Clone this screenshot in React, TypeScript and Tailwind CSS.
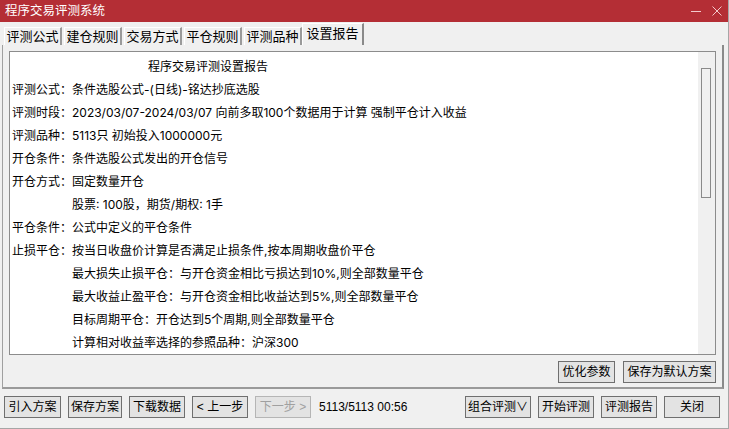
import React, { useState } from 'react';

const FONT = "font-['Liberation_Sans','Noto_Sans_CJK_SC',sans-serif]";

const tabs = ['评测公式', '建仓规则', '交易方式', '平仓规则', '评测品种', '设置报告'];

// report lines: [label, text, indented]
const lines: { label?: string; text: string; indent?: boolean }[] = [
  { label: '评测公式：', text: '条件选股公式-(日线)-铭达抄底选股' },
  { label: '评测时段：', text: '2023/03/07-2024/03/07 向前多取100个数据用于计算 强制平仓计入收益' },
  { label: '评测品种：', text: '5113只 初始投入1000000元' },
  { label: '开仓条件：', text: '条件选股公式发出的开仓信号' },
  { label: '开仓方式：', text: '固定数量开仓' },
  { text: '股票: 100股，期货/期权: 1手', indent: true },
  { label: '平仓条件：', text: '公式中定义的平仓条件' },
  { label: '止损平仓：', text: '按当日收盘价计算是否满足止损条件,按本周期收盘价平仓' },
  { text: '最大损失止损平仓：与开仓资金相比亏损达到10%,则全部数量平仓', indent: true },
  { text: '最大收益止盈平仓：与开仓资金相比收益达到5%,则全部数量平仓', indent: true },
  { text: '目标周期平仓：开仓达到5个周期,则全部数量平仓', indent: true },
  { text: '计算相对收益率选择的参照品种：沪深300', indent: true },
];

const Btn: React.FC<{ w: string; disabled?: boolean; children: React.ReactNode }> = ({ w, disabled, children }) => (
  <button
    className={`${w} h-[22px] flex items-center justify-center border border-[#6f6f6f] bg-[#e3e3e3] text-[12px] leading-none ${disabled ? 'text-[#a0a0a0] border-[#b5b5b5]' : 'text-black'}`}
  >
    {children}
  </button>
);

const App: React.FC = () => {
  const [active, setActive] = useState(5);

  return (
    <div className={`w-[729px] h-[429px] bg-[#f0f0f0] flex flex-col border-r border-b border-[#a6a6a6] ${FONT} text-[12px] text-black overflow-hidden`}>
      {/* title bar */}
      <div className="h-[22px] shrink-0 bg-[#b42e35] flex items-center pl-[5px] text-white text-[12.5px]">
        <span>程序交易评测系统</span>
        <div className="ml-auto flex items-center gap-[11px] pr-[6px]">
          <svg width="10" height="10" viewBox="0 0 10 10"><path d="M0 5.5h10" stroke="#f3c9cb" strokeWidth="1" /></svg>
          <svg width="10" height="10" viewBox="0 0 10 10"><path d="M0.5 0.5l9 9M9.5 0.5l-9 9" stroke="#f3c9cb" strokeWidth="1" /></svg>
        </div>
      </div>

      {/* tabs */}
      <div className="h-[23px] shrink-0 flex items-end pl-[4px] gap-[2px]">
        {tabs.map((t, i) => (
          <div
            key={t}
            onClick={() => setActive(i)}
            className={
              i === active
                ? 'h-[22px] w-[62px] -ml-[2px] flex items-center justify-center border-t border-l border-white border-r-2 border-r-[#8a8a8a] bg-[#f0f0f0] text-[13px] pb-[1px]'
                : 'h-[18px] w-[58px] flex items-center justify-center border-t border-l border-white border-r-2 border-r-[#9a9a9a] bg-[#f0f0f0] text-[13px]'
            }
          >
            {t}
          </div>
        ))}
      </div>

      {/* tab page */}
      <div className="mx-[2px] w-[722px] h-[344px] shrink-0 border-l border-[#a0a0a0] border-r-2 border-r-[#8a8a8a] border-b-2 border-b-[#9a9a9a] flex flex-col pt-[6px] px-[6px]">
        <div className="h-[304px] shrink-0 border border-[#8c8c8c] bg-white flex overflow-hidden">
          <div className="flex-1 pt-[3px] pl-[2px] text-[12px] leading-[23px] overflow-hidden whitespace-nowrap font-['Inter','Noto_Sans_CJK_SC',sans-serif]">
            <div className="pl-[136px]">程序交易评测设置报告</div>
            {lines.map((l, i) => (
              <div key={i} className="flex">
                {l.indent ? <span className="w-[60px] shrink-0" /> : <span className="w-[60px] shrink-0">{l.label}</span>}
                <span>{l.text}</span>
              </div>
            ))}
          </div>
          {/* scrollbar */}
          <div className="w-[17px] shrink-0 bg-[#f0f0f0] pt-[16px] pl-[3px]">
            <div className="w-[10px] h-[130px] border border-[#8a8a8a] bg-[#f0f0f0]" />
          </div>
        </div>
        <div className="flex justify-end gap-[8px] mt-[6px]">
          <Btn w="w-[57px]">优化参数</Btn>
          <Btn w="w-[93px]">保存为默认方案</Btn>
        </div>
      </div>

      {/* bottom bar */}
      <div className="flex items-center mt-[7px] pl-[4px] pr-[8px]">
        <div className="flex items-center gap-[7px]">
          <Btn w="w-[57px]">引入方案</Btn>
          <Btn w="w-[54px]">保存方案</Btn>
          <Btn w="w-[56px]">下载数据</Btn>
          <Btn w="w-[56px]">&lt; 上一步</Btn>
          <Btn w="w-[56px]" disabled>下一步 &gt;</Btn>
          <span className="ml-[1px] font-['Liberation_Sans',sans-serif]">5113/5113 00:56</span>
        </div>
        <div className="ml-auto flex items-center gap-[7px]">
          <Btn w="w-[66px]">组合评测∨</Btn>
          <Btn w="w-[56px]">开始评测</Btn>
          <Btn w="w-[56px]">评测报告</Btn>
          <Btn w="w-[56px]">关闭</Btn>
        </div>
      </div>
    </div>
  );
};

export default App;
